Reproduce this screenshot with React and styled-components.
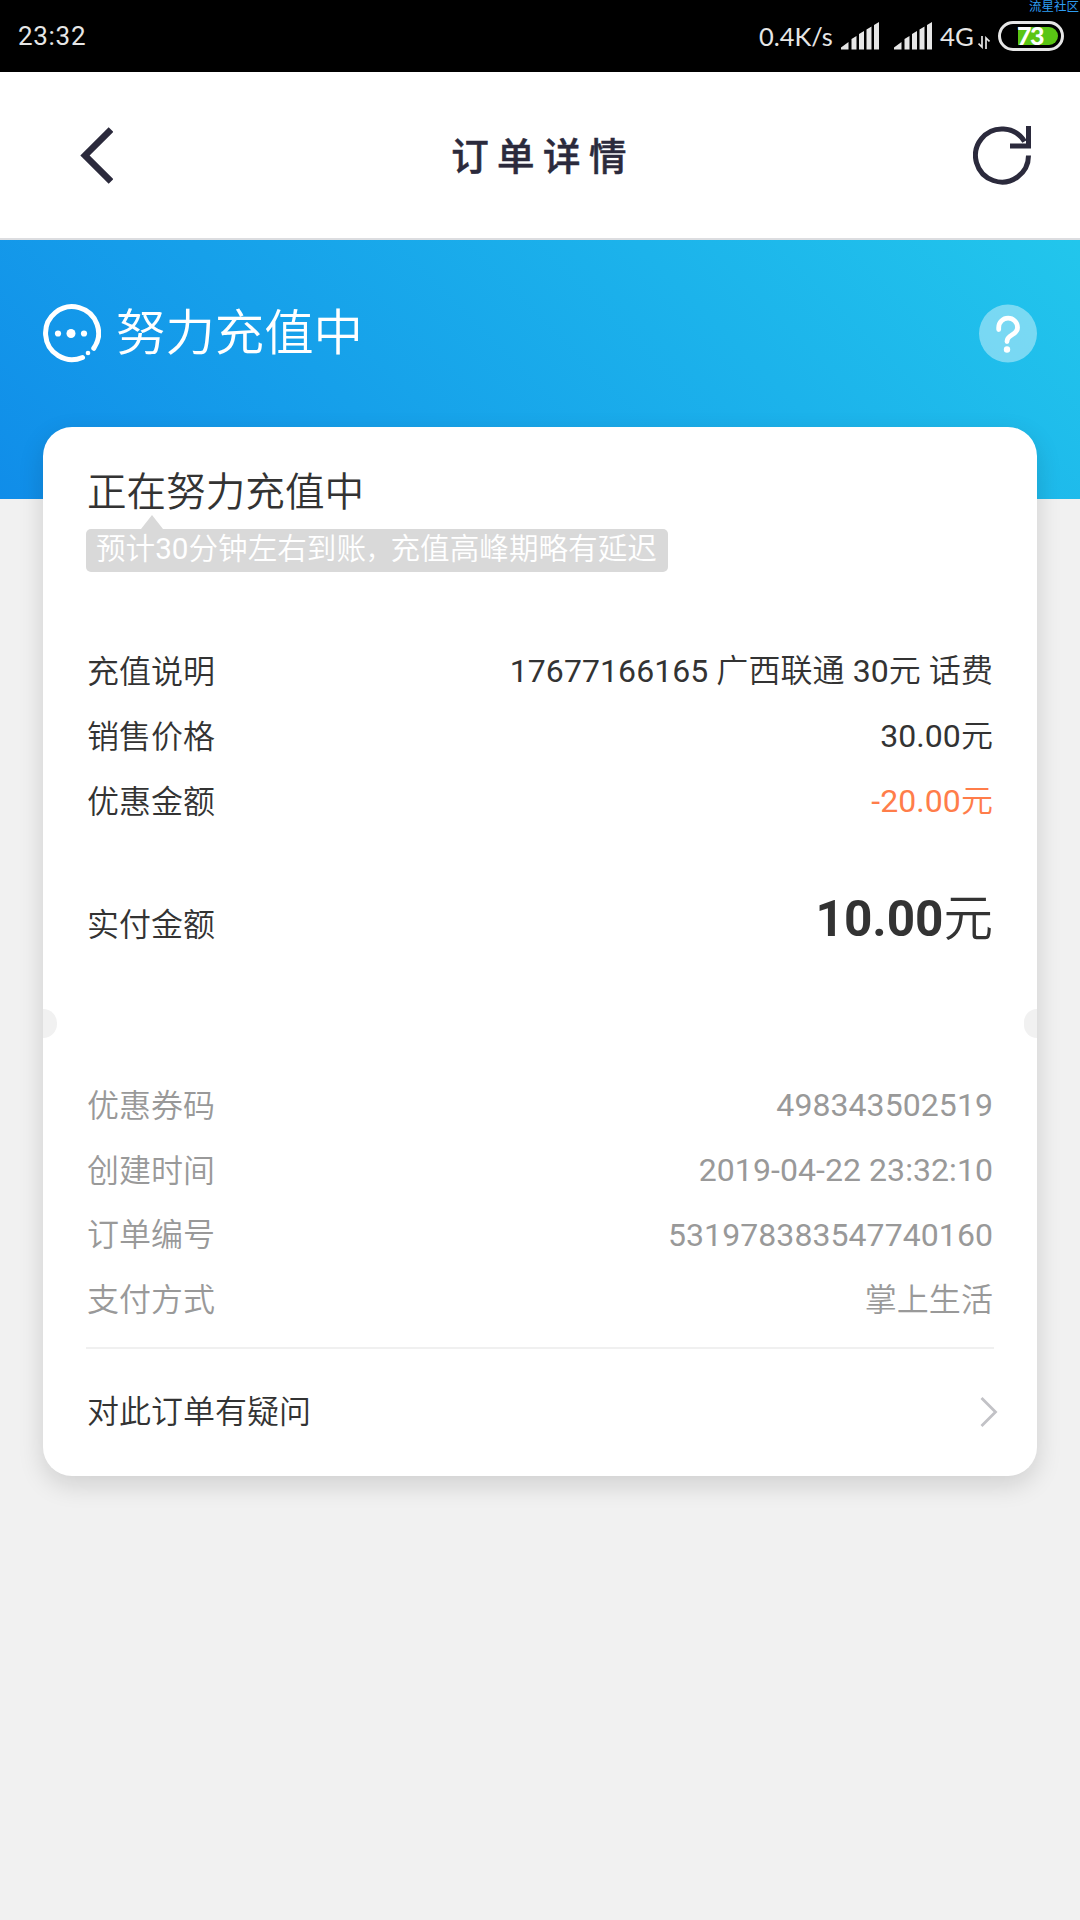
import React from "react";
import styled, { createGlobalStyle } from "styled-components";

const GlobalStyle = createGlobalStyle`
  * { box-sizing: border-box; }
  body {
    margin: 0;
    background: #f1f1f1;
    color: #333;
    font-family: Roboto, "Noto Sans CJK SC", sans-serif;
  }
  svg { display: block; flex: none; }
`;

const Screen = styled.div`
  width: 1080px;
  height: 1920px;
  overflow: hidden;
  background: #f1f1f1;
`;

const StatusBar = styled.div`
  position: relative;
  height: 72px;
  padding: 0 16px 0 18px;
  display: flex;
  align-items: center;
  background: #000;
  color: #e6e6e6;
  font-size: 26px;
  line-height: 72px;
`;

const Clock = styled.span`
  margin-right: auto;
  letter-spacing: 0.7px;
`;

const Speed = styled.span`
  width: 82px;
  font-family: Lato, sans-serif;
  font-size: 25.4px;
  line-height: 70px;
  white-space: nowrap;
`;

const Signal = styled.span`
  width: 53px;
`;

const Network = styled.span`
  width: 38px;
  margin-left: -7px;
  font-family: Lato, sans-serif;
  font-size: 25.8px;
  line-height: 70px;
`;

const Arrows = styled.span`
  width: 20px;
  padding-top: 12px;
`;

const Battery = styled.span`
  display: flex;
  align-items: center;
  justify-content: center;
  width: 66px;
  height: 30px;
  padding: 3px;
  border: 3px solid #e6e6e6;
  border-radius: 15px;
  background: #000;
`;

const Charge = styled.span`
  display: flex;
  align-items: center;
  width: 40px;
  height: 18px;
  margin-left: 14px;
  border-radius: 0 9px 9px 0;
  background: #5ac514;
  color: #fff;
  font: 900 25px/16px Lato, sans-serif;
  letter-spacing: -1.5px;
  text-indent: -1px;
  padding-bottom: 2px;
`;

const Watermark = styled.span`
  position: absolute;
  top: 0;
  left: 1029px;
  color: #2e9df2;
  font-size: 12.5px;
  line-height: 13px;
  white-space: nowrap;
`;

const Header = styled.header`
  height: 168px;
  padding: 1px 45px 0 77px;
  display: flex;
  align-items: center;
  justify-content: space-between;
  border-bottom: 2px solid #dcdde0;
  background: #fff;
  color: #2b2a3c;
`;

const Title = styled.h1`
  margin: 0;
  padding-top: 3px;
  font-size: 37.5px;
  line-height: 60px;
  font-weight: 500;
  letter-spacing: 8.4px;
  -webkit-text-stroke: 0.5px #2b2a3c;
`;

const Hero = styled.section`
  height: 259px;
  padding: 62px 42px 0;
  display: flex;
  align-items: flex-start;
  background: linear-gradient(45deg, #108de9 0%, #22c6ec 100%);
  color: #fff;

  svg:first-child { margin-left: -1px; }
`;

const HeroTitle = styled.h2`
  flex: 1;
  margin: 1px 0 0 15px;
  font-size: 49.4px;
  line-height: 60px;
  font-weight: 350;
`;

const Card = styled.main`
  position: relative;
  height: 1048.5px;
  margin: -72px 43px 0;
  padding: 36px 43px 0;
  border-radius: 29px;
  background: #fff;
  box-shadow: 0 9px 26px rgba(0, 0, 0, 0.14);
`;

const CardTitle = styled.h3`
  margin: 0;
  height: 66px;
  padding-left: 1px;
  font-size: 39.6px;
  line-height: 60px;
  font-weight: 350;
`;

const Tip = styled.div`
  position: relative;
  width: 582px;
  height: 43px;
  padding-left: 10px;
  border-radius: 5px;
  background: #d9d9d9;
  color: #fff;
  font-size: 29.6px;
  line-height: 41px;
  white-space: nowrap;

  &::before {
    content: "";
    position: absolute;
    left: 55px;
    top: -14px;
    border: 11.5px solid transparent;
    border-top: 0;
    border-bottom: 14px solid #d9d9d9;
  }
`;

const Comma = styled.span`
  font-size: 24.5px;
`;

const Han = styled.span`
  font-weight: 350;
`;

const Rows = styled.dl`
  margin: ${(p) => p.$top}px 0 0;
  color: ${(p) => (p.$muted ? "#999" : "#333")};
  font-size: 32px;
`;

const Row = styled.div`
  display: flex;
  align-items: center;
  justify-content: space-between;
  height: 64.8px;
  padding: 0 1px;
  line-height: 64px;
`;

const Label = styled.dt`
  padding-top: 1px;
  font-weight: 350;
`;

const Value = styled.dd`
  margin: 0;
  letter-spacing: 0.07px;
  color: ${(p) => (p.$discount ? "#ff7d4a" : "inherit")};
`;

const Payable = styled(Row)`
  margin-top: 48px;
  height: 76px;
  align-items: flex-end;
`;

const Amount = styled.dd`
  margin: 0;
  font-size: 49.5px;
  line-height: 76px;

  b { font-weight: 700; }
`;

const Notch = styled.i`
  position: absolute;
  top: 582px;
  ${(p) => p.$side}: 0;
  width: 13.5px;
  height: 29px;
  border-radius: ${(p) => (p.$side === "left" ? "0 14px 14px 0" : "14px 0 0 14px")};
  background: #f1f1f1;
`;

const Question = styled.div`
  display: flex;
  align-items: center;
  justify-content: space-between;
  margin-top: 15px;
  height: 121px;
  padding-left: 1px;
  border-top: 2px solid #f0f0f0;
  font-size: 32px;
  font-weight: 350;

  svg { margin: 7px -4px 0 0; }
`;

const payment = [
  ["充值说明", "17677166165 广西联通 30元 话费"],
  ["销售价格", "30.00元"],
  ["优惠金额", "-20.00元", true],
];

const order = [
  ["优惠券码", "498343502519"],
  ["创建时间", "2019-04-22 23:32:10"],
  ["订单编号", "531978383547740160"],
  ["支付方式", "掌上生活"],
];

const mixed = (text) =>
  text
    .split(/([\u4e00-\u9fff]+)/)
    .filter(Boolean)
    .map((part, i) => (/[\u4e00-\u9fff]/.test(part) ? <Han key={i}>{part}</Han> : part));

const SignalIcon = () => (
  <svg width="39" height="28" viewBox="0 0 39 28" fill="#e6e6e6">
    <path d="M0 27.5v-2L7.5 20v7.5zM10.5 27.5V17l5-3v13.5zM18 27.5V12l5-3v18.5zM25.5 27.5V7.5l5-3v23zM33 27.5V3l5-3v27.5z" />
  </svg>
);

const BackIcon = () => (
  <svg width="36" height="60" viewBox="0 0 36 60" fill="none" stroke="currentColor" strokeWidth="6.6">
    <path d="M34 3.500 8 29.500l26 26" />
  </svg>
);

const RefreshIcon = () => (
  <svg width="62" height="62" viewBox="0 0 62 62" fill="none" stroke="currentColor" strokeWidth="5">
    <path d="M55.5 30.500A26.500 26.500 0 1 1 51.500 16.500" />
    <path d="M55.500 1V21H37" />
  </svg>
);

const PendingIcon = () => (
  <svg width="60" height="62" viewBox="0 0 60 62" fill="#fff">
    <path d="M52.8 46.3A26.5 26.5 0 1 0 41.5 55.5" fill="none" stroke="#fff" strokeWidth="5" strokeLinecap="round" />
    <circle cx="17" cy="31.5" r="3.1" />
    <circle cx="30" cy="31.5" r="4.5" />
    <circle cx="43" cy="31.5" r="3.1" />
    <circle cx="47" cy="51" r="2.3" />
  </svg>
);

const HelpIcon = () => (
  <svg width="60" height="62" viewBox="0 0 60 62" fill="none">
    <circle cx="30" cy="31.5" r="29" fill="#fff" fillOpacity="0.4" />
    <path d="M20.7 27.500V25.500a9.400 9.400 0 0 1 18.800 0C39.500 33.500 29 32 29 39.500" stroke="#fff" strokeWidth="4.8" strokeLinecap="round" />
    <circle cx="29" cy="47.500" r="3.2" fill="#fff" />
  </svg>
);

const ChevronIcon = () => (
  <svg width="18" height="32" viewBox="0 0 18 32" fill="none" stroke="#c2c2c6" strokeWidth="2.8">
    <path d="M1.500 2 15.500 16l-14 14" />
  </svg>
);

export default function App() {
  return (
    <Screen>
      <GlobalStyle />
      <StatusBar>
        <Clock>23:32</Clock>
        <Speed>0.4K/s</Speed>
        <Signal><SignalIcon /></Signal>
        <Signal><SignalIcon /></Signal>
        <Network>4G</Network>
        <Arrows>
          <svg width="12" height="13" viewBox="0 0 12 13" fill="none" stroke="#e6e6e6" strokeWidth="1.7">
            <path d="M4 0v11L.5 7.5M8 13V2l3.500 3.500" />
          </svg>
        </Arrows>
        <Battery><Charge>73</Charge></Battery>
        <Watermark>流星社区</Watermark>
      </StatusBar>
      <Header>
        <BackIcon />
        <Title>订单详情</Title>
        <RefreshIcon />
      </Header>
      <Hero>
        <PendingIcon />
        <HeroTitle>努力充值中</HeroTitle>
        <HelpIcon />
      </Hero>
      <Card>
        <CardTitle>正在努力充值中</CardTitle>
        <Tip>
          {mixed("预计30分钟左右到账")}
          <Comma>，</Comma>
          {mixed("充值高峰期略有延迟")}
        </Tip>
        <Rows $top={67}>
          {payment.map(([label, value, discount]) => (
            <Row key={label}>
              <Label>{label}</Label>
              <Value $discount={discount}>{mixed(value)}</Value>
            </Row>
          ))}
          <Payable>
            <Label>实付金额</Label>
            <Amount><b>10.00</b><Han>元</Han></Amount>
          </Payable>
        </Rows>
        <Notch $side="left" />
        <Notch $side="right" />
        <Rows $top={115.5} $muted>
          {order.map(([label, value]) => (
            <Row key={label}>
              <Label>{label}</Label>
              <Value>{mixed(value)}</Value>
            </Row>
          ))}
        </Rows>
        <Question>
          对此订单有疑问
          <ChevronIcon />
        </Question>
      </Card>
    </Screen>
  );
}
